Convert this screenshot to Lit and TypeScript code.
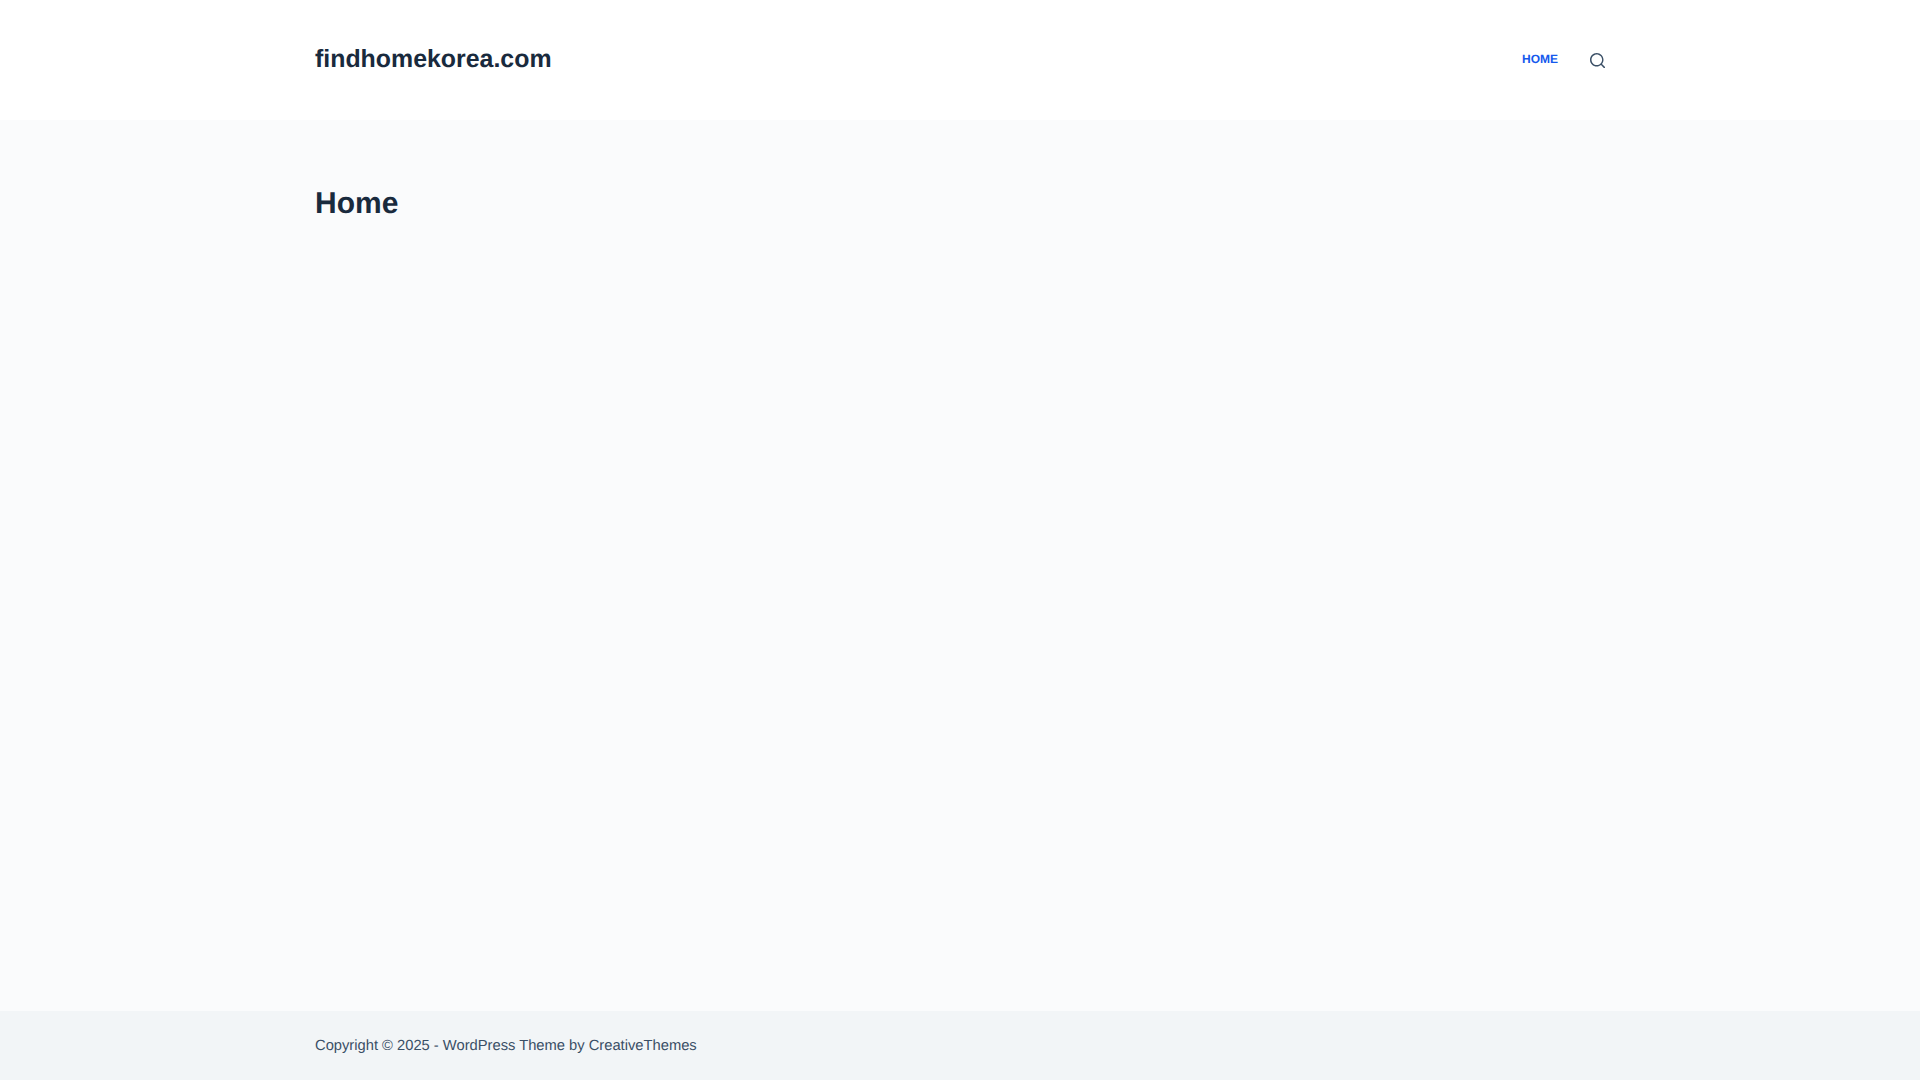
import { LitElement, html, css } from 'lit';
import { customElement } from 'lit/decorators.js';

@customElement('app-root')
export class AppRoot extends LitElement {
  static styles = css`
    :host {
      display: flex;
      flex-direction: column;
      min-height: 1080px;
      background: #fafbfc;
      font-family: 'Liberation Sans', Arial, sans-serif;
      color: #3a4f66;
      text-rendering: geometricPrecision;
    }

    .container {
      width: 1290px;
      margin: 0 auto;
    }

    header {
      background: #ffffff;
      height: 120px;
    }

    header .container {
      height: 100%;
      display: flex;
      align-items: center;
      justify-content: space-between;
    }

    .site-title {
      font-size: 24.9px;
      font-weight: 700;
      color: #192a3d;
      margin-bottom: 1px;
    }

    nav {
      display: flex;
      align-items: center;
      gap: 32px;
    }

    .menu-link {
      font-size: 12px;
      font-weight: 700;
      color: #1559ed;
      margin-bottom: 3px;
    }

    .search {
      display: block;
      margin-top: 1px;
    }

    main {
      flex: 1;
      padding-top: 64px;
    }

    h1 {
      margin: 0;
      font-size: 30px;
      line-height: 1.3;
      font-weight: 700;
      color: #192a3d;
    }

    footer {
      background: #f2f5f7;
      height: 69px;
    }

    footer .container {
      height: 100%;
      display: flex;
      align-items: center;
      font-size: 14.72px;
    }
  `;

  render() {
    return html`
      <header>
        <div class="container">
          <div class="site-title">findhomekorea.com</div>
          <nav>
            <span class="menu-link">HOME</span>
            <svg class="search" width="15" height="15" viewBox="0 0 15 15" fill="#3a4f66">
              <path d="M14.8 13.7 12 11c.9-1.200 1.500-2.600 1.500-4.200 0-3.700-3-6.800-6.800-6.800S0 3 0 6.800s3 6.800 6.800 6.800c1.600 0 3.100-.6 4.200-1.500l2.800 2.800c.1.100.300.200.500.200s.400-.1.500-.2c.3-.4.300-.9 0-1.200zM1.500 6.800c0-2.900 2.400-5.300 5.300-5.300s5.300 2.400 5.300 5.300-2.400 5.300-5.300 5.300-5.300-2.400-5.300-5.300z"></path>
            </svg>
          </nav>
        </div>
      </header>
      <main>
        <div class="container">
          <h1>Home</h1>
        </div>
      </main>
      <footer>
        <div class="container">
          <span>Copyright © 2025 - WordPress Theme by CreativeThemes</span>
        </div>
      </footer>
    `;
  }
}
